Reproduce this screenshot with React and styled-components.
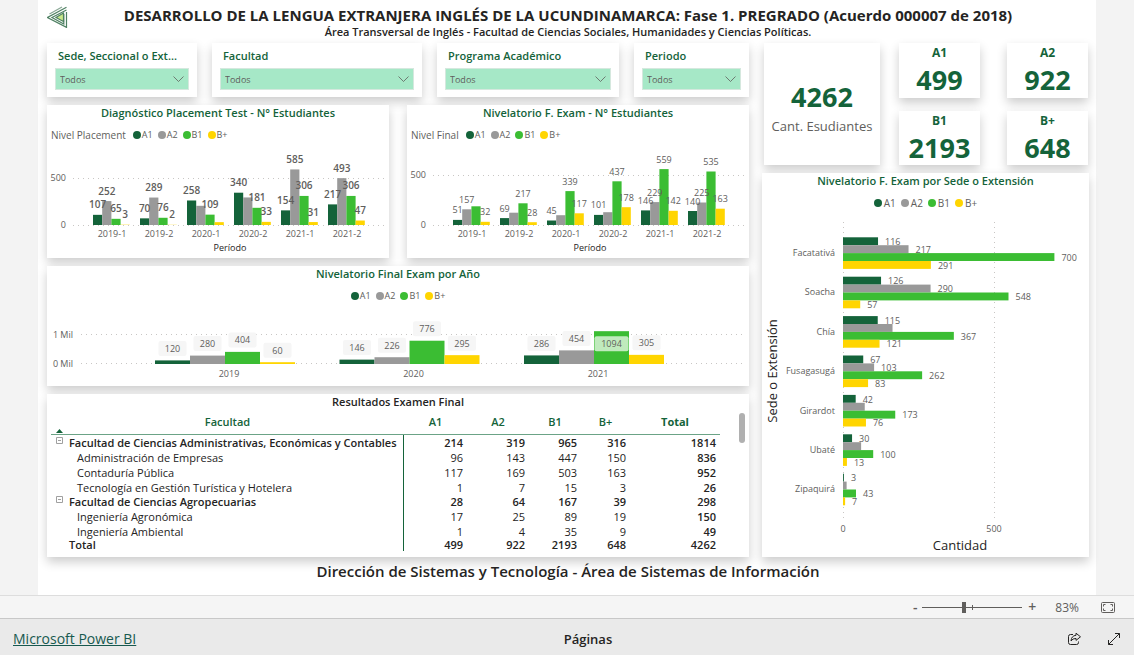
import React from 'react'
import styled, { createGlobalStyle } from 'styled-components'

const GlobalStyle = createGlobalStyle`
* {
  box-sizing: border-box;
}
body {
  margin: 0;
  background: #f3f3f3;
  color: #252423;
  font-family: "Open Sans", "Noto Sans", sans-serif;
}
h1, h2, h3, p {
  margin: 0;
}
`

const green = '#14633a'
const grey = '#605e5c'

const series = [
  { name: 'A1', color: '#14633a' },
  { name: 'A2', color: '#999999' },
  { name: 'B1', color: '#3bbd33' },
  { name: 'B+', color: '#ffd500' },
]

// hide: indexes of the series whose data label is not shown
const placement = [
  { label: '2019-1', values: [107, 252, 65, 3], hide: [] },
  { label: '2019-2', values: [70, 289, 76, 2], hide: [] },
  { label: '2020-1', values: [258, 202, 109, 30], hide: [1, 3] },
  { label: '2020-2', values: [340, 290, 181, 33], hide: [1] },
  { label: '2021-1', values: [154, 585, 306, 31], hide: [] },
  { label: '2021-2', values: [217, 493, 306, 47], hide: [] },
]

const finalExam = [
  { label: '2019-1', values: [51, 157, 187, 32], hide: [2] },
  { label: '2019-2', values: [69, 123, 217, 28], hide: [1] },
  { label: '2020-1', values: [45, 98, 339, 117], hide: [1] },
  { label: '2020-2', values: [101, 128, 437, 178], hide: [1] },
  { label: '2021-1', values: [146, 229, 559, 142], hide: [] },
  { label: '2021-2', values: [140, 225, 535, 163], hide: [] },
]

const years = [
  { label: '2019', values: [120, 280, 404, 60] },
  { label: '2020', values: [146, 226, 776, 295] },
  { label: '2021', values: [286, 454, 1094, 305] },
]

const campuses = [
  { label: 'Facatativá', values: [116, 217, 700, 291], hide: [] },
  { label: 'Soacha', values: [126, 290, 548, 57], hide: [] },
  { label: 'Chía', values: [115, 164, 367, 121], hide: [1] },
  { label: 'Fusagasugá', values: [67, 103, 262, 83], hide: [] },
  { label: 'Girardot', values: [42, 72, 173, 76], hide: [1] },
  { label: 'Ubaté', values: [30, 60, 100, 13], hide: [1] },
  { label: 'Zipaquirá', values: [3, 12, 43, 7], hide: [1] },
]

const results = [
  { name: 'Facultad de Ciencias Administrativas, Económicas y Contables', kind: 'group', values: [214, 319, 965, 316, 1814] },
  { name: 'Administración de Empresas', kind: 'child', values: [96, 143, 447, 150, 836] },
  { name: 'Contaduría Pública', kind: 'child', values: [117, 169, 503, 163, 952] },
  { name: 'Tecnología en Gestión Turística y Hotelera', kind: 'child', values: [1, 7, 15, 3, 26] },
  { name: 'Facultad de Ciencias Agropecuarias', kind: 'group', values: [28, 64, 167, 39, 298] },
  { name: 'Ingeniería Agronómica', kind: 'child', values: [17, 25, 89, 19, 150] },
  { name: 'Ingeniería Ambiental', kind: 'child', values: [1, 4, 35, 9, 49] },
  { name: 'Total', kind: 'total', values: [499, 922, 2193, 648, 4262] },
]

const filters = [
  { id: 'sede', label: 'Sede, Seccional o Ext...' },
  { id: 'facultad', label: 'Facultad' },
  { id: 'programa', label: 'Programa Académico' },
  { id: 'periodo', label: 'Periodo' },
]

const Canvas = styled.main`
  margin: 0 38px;
  padding: 0 7px 0 9px;
  background: #ffffff;
`

const Header = styled.header`
  display: grid;
  grid-template-columns: 24px 1fr 24px;
  align-items: start;
  height: 43px;
  padding-top: 6px;
`

const Titles = styled.div`
  display: flex;
  flex-direction: column;
  align-items: center;
  white-space: nowrap;
`

const Title = styled.h1`
  font-size: 15px;
  line-height: 19px;
`

const Subtitle = styled.p`
  font-size: 11px;
  line-height: 14px;
  font-weight: 600;
`

const Board = styled.div`
  display: grid;
  grid-template-columns: minmax(0, 702fr) minmax(0, 327fr);
  gap: 13px;
`

const Column = styled.div`
  display: flex;
  flex-direction: column;
  gap: 8px;
`

const Panel = styled.section`
  background: #ffffff;
  box-shadow: 0 5px 10px rgba(0, 0, 0, 0.2);
`

const PanelTitle = styled.h2`
  font-size: 11px;
  line-height: 16px;
  font-weight: 600;
  text-align: center;
  white-space: nowrap;
  color: ${(p) => (p.$dark ? '#252423' : green)};
`

const Filters = styled.div`
  display: grid;
  grid-template-columns: 150fr 210fr 182fr 115fr;
  gap: 15px;
`

const FilterCard = styled(Panel)`
  height: 54px;
  padding: 5px 8px 0;
`

const FilterLabel = styled.label`
  display: block;
  padding-left: 3px;
  font-size: 11px;
  line-height: 16px;
  font-weight: 600;
  white-space: nowrap;
  color: ${green};
`

const SelectWrap = styled.div`
  display: grid;
  align-items: center;
  margin-top: 4px;

  > * {
    grid-area: 1 / 1;
  }
  svg {
    justify-self: end;
    margin-right: 5px;
    pointer-events: none;
  }
`

const Select = styled.select`
  appearance: none;
  width: 100%;
  height: 22px;
  padding: 2px 4px 0;
  border: 1px solid #d5e8de;
  border-radius: 0;
  background: #a6e8c7;
  color: ${grey};
  font: 9px/16px "Open Sans", sans-serif;
`

const Pair = styled.div`
  display: grid;
  grid-template-columns: 1fr 1fr;
  gap: 18px;
`

const Legend = styled.div`
  display: flex;
  justify-content: ${(p) => (p.$center ? 'center' : 'flex-start')};
  align-items: center;
  gap: 5px;
  height: 22px;
  padding: 6px 4px 0;
  font-size: ${(p) => (p.$large ? '10px' : '9px')};
  line-height: 16px;
  color: ${grey};
`

const LegendTitle = styled.span`
  margin-right: 2px;
  font-size: 10px;
`

const LegendItem = styled.span`
  display: flex;
  align-items: center;
  gap: ${(p) => (p.$large ? '2px' : '1px')};
`

const Dot = styled.i`
  width: 8px;
  height: 8px;
  border-radius: 50%;
  background: ${(p) => p.$color};
`

const Plot = styled.svg`
  display: block;
  width: 100%;
  height: auto;
  font-size: 9px;
  fill: ${grey};

  .grid {
    stroke: #c8c6c4;
    stroke-dasharray: 1 4;
  }
  .bold {
    font-size: 10px;
    font-weight: 600;
  }
  .axis {
    font-size: 9px;
    fill: #252423;
  }
  .big {
    font-size: 13px;
    fill: #252423;
  }
`

const Kpis = styled.div`
  display: grid;
  grid-template-columns: 116fr 189fr;
  gap: 19px;
  height: 122px;
  padding: 0 1px 0 2px;
`

const TotalCard = styled(Panel)`
  display: flex;
  flex-direction: column;
  align-items: center;
  justify-content: center;
  gap: 2px;
  padding-top: 8px;
`

const LevelCards = styled.div`
  display: grid;
  grid-template-columns: 1fr 1fr;
  gap: 13px 27px;
`

const LevelCard = styled(Panel)`
  text-align: center;
`

const LevelName = styled.h3`
  font-size: 12px;
  line-height: 20px;
  color: ${green};
`

const Value = styled.p`
  font-size: 27px;
  line-height: 34px;
  font-weight: 700;
  color: ${green};
`

const Caption = styled.p`
  font-size: 13px;
  line-height: 20px;
  white-space: nowrap;
  color: ${grey};
`

const TableArea = styled.div`
  display: flex;
  align-items: flex-start;
  gap: 19px;
  padding: 0 4px 6px;
`

const ScrollThumb = styled.span`
  flex: none;
  width: 6px;
  height: 30px;
  margin-top: 3px;
  border-radius: 3px;
  background: #b0b0b0;
`

const Table = styled.table`
  flex: 1;
  table-layout: fixed;
  border-collapse: separate;
  border-spacing: 0;
  font-size: 11px;
  line-height: 13px;
  color: #252423;

  td, th {
    padding: 0 4px 0 0;
  }
`

const HeadCell = styled.th`
  height: 25px;
  width: ${(p) => p.$width || 'auto'};
  border-bottom: 1px solid #6ba386;
  font-weight: ${(p) => (p.$strong ? 700 : 600)};
  color: ${green};

  && {
    padding: 0 0 2px;
  }
  svg {
    float: left;
    margin: 14px -12px -14px 5px;
  }
`

const rowHeight = { group: '14px', child: '15px', total: '13px' }

const Row = styled.tr`
  height: ${(p) => rowHeight[p.$kind]};
  font-weight: ${(p) => (p.$kind === 'child' ? 400 : 600)};

  && > * {
    padding-top: ${(p) => (p.$kind === 'child' ? '1px' : 0)};
  }
`

const NameCell = styled.th`
  border-right: 1px solid ${green};
  font-weight: inherit;
  text-align: left;
  white-space: nowrap;

  && {
    padding-left: ${(p) => (p.$kind === 'child' ? '26px' : p.$kind === 'total' ? '18px' : '5px')};
  }
`

const Toggle = styled.button`
  width: 7px;
  height: 7px;
  margin: 0 6px 0 0;
  padding: 0;
  border: 0;
  background: none;
  line-height: 0;
  vertical-align: 3px;
`

const NumberCell = styled.td`
  text-align: right;
  font-weight: ${(p) => (p.$strong ? 600 : 'inherit')};
`

const Credits = styled.p`
  padding: 3px 0 12px;
  font-size: 15px;
  line-height: 23px;
  font-weight: 600;
  text-align: center;
`

const ZoomBar = styled.div`
  display: flex;
  justify-content: flex-end;
  align-items: center;
  height: 23px;
  padding-right: 19px;
  position: relative;
  border-top: 1px solid #dddddd;
  background: #f5f5f5;
  font-size: 12px;
  color: ${grey};
`

const ZoomButton = styled.button`
  width: 14px;
  height: 20px;
  padding: 0;
  border: 0;
  background: none;
  color: ${grey};
  font: 600 14px/18px "Open Sans", sans-serif;
  text-align: center;
`

const ZoomRange = styled.input`
  appearance: none;
  width: 100px;
  height: 11px;
  margin: 0 3px 0 0;
  background:
    linear-gradient(${grey}, ${grey}) 50px 3px / 1px 5px no-repeat,
    linear-gradient(${grey}, ${grey}) 0 5px / 100% 1px no-repeat;

  &::-webkit-slider-thumb {
    appearance: none;
    width: 4px;
    height: 11px;
    background: ${grey};
  }
`

const ZoomValue = styled.span`
  margin: 0 22px 0 16px;
`

const Footer = styled.footer`
  display: grid;
  grid-template-columns: 1fr auto 1fr;
  align-items: center;
  height: 37px;
  padding: 4px 13px 0;
  position: relative;
  border-top: 1px solid #c8c8c8;
  background: #eaeaea;
  font-size: 13px;
  line-height: 18px;
`

const BrandLink = styled.a`
  justify-self: start;
  font-size: 14px;
  color: #17594f;
`

const Pages = styled.span`
  padding-left: 42px;
  font-weight: 600;
`

const Actions = styled.div`
  display: flex;
  justify-content: flex-end;
  gap: 25px;
`

const IconButton = styled.button`
  display: flex;
  padding: 0;
  border: 0;
  background: none;
  color: #252423;
`

const BackLogo = () => (
  <svg width="22" height="22" viewBox="1 0 22 22" fill="none" stroke="#4f8163" strokeWidth="1.2">
    <path d="M20.5 1.2 L1.5 11.5 L20.5 21.4 V6" />
    <path d="M20.5 4 L6 11.5 L17.8 18 V8" />
    <path d="M16 1 L3.5 8" stroke="#8aa896" />
    <path d="M17.5 7 L10 11.5 L17.5 15.5 Z" fill="#c9e88a" />
  </svg>
)

const Chevron = () => (
  <svg width="11" height="6" viewBox="0 0 11 6" fill="none" stroke="#605e5c">
    <path d="M0.5 0.5 L5.5 5.5 L10.5 0.5" strokeWidth="0.8" />
  </svg>
)

const SeriesLegend = ({ title, center, large }) => (
  <Legend $center={center} $large={large}>
    {title && <LegendTitle>{title}</LegendTitle>}
    {series.map((s) => (
      <LegendItem key={s.name} $large={large}>
        <Dot $color={s.color} />
        {s.name}
      </LegendItem>
    ))}
  </Legend>
)

const PeriodChart = ({ data, scale, bold }) => (
  <Plot viewBox="0 0 342 115">
    <path className="grid" d={`M26 82.5 H337 M26 ${Math.round(82 - 500 * scale)}.5 H337`} />
    <text x="19" y="85" textAnchor="end">0</text>
    <text x="19" y={85 - 500 * scale} textAnchor="end">500</text>
    {data.map((group, g) => (
      <g key={group.label}>
        {group.values.map((v, i) => (
          <rect key={i} x={46 + g * 47 + i * 9.2} y={82 - v * scale} width="9.2" height={v * scale} fill={series[i].color} />
        ))}
        <text x={65 + g * 47} y="94" textAnchor="middle">{group.label}</text>
      </g>
    ))}
    {data.map((group, g) =>
      group.values.map((v, i) =>
        group.hide.includes(i) ? null : (
          <text key={`${g}-${i}`} className={bold ? 'bold' : ''} x={50.6 + g * 47 + i * 9.2} y={75.5 - v * scale} textAnchor="middle">{v}</text>
        )
      )
    )}
    <text className="axis" x="183" y="108" textAnchor="middle">Período</text>
  </Plot>
)

const YearChart = () => (
  <Plot viewBox="0 0 702 82">
    <path className="grid" d="M34 30.5 H695 M34 59.5 H695" />
    <text x="26" y="34" textAnchor="end">1 Mil</text>
    <text x="26" y="63" textAnchor="end">0 Mil</text>
    {years.map((year, g) => (
      <g key={year.label}>
        {year.values.map((v, i) => {
          const x = 108 + g * 184.5 + i * 35
          const h = v * 0.03
          const inside = v > 1000
          const w = inside ? 34 : 28
          const cy = inside ? 72 - h + 0.5 : 48 - h
          return (
            <g key={i}>
              <rect x={x} y={60 - h} width="35" height={h} fill={series[i].color} />
              <rect x={x + 17.5 - w / 2} y={cy - 7.5} width={w} height="15" rx="2" fill={inside ? '#ffffff' : '#f6f6f6'} opacity={inside ? 0.68 : 1} />
              <text x={x + 17.5} y={cy + 3.5} textAnchor="middle">{v}</text>
            </g>
          )
        })}
        <text x={182 + g * 184.5} y="73" textAnchor="middle">{year.label}</text>
      </g>
    ))}
  </Plot>
)

const CampusChart = () => (
  <Plot viewBox="0 0 327 346">
    <path className="grid" d="M81.5 11 V309 M232.5 11 V309" />
    {campuses.map((campus, g) => (
      <text key={campus.label} x="73" y={45 + g * 39.4} textAnchor="end">{campus.label}</text>
    ))}
    {series.map((s, i) => (
      <g key={s.name}>
        {campuses.map((campus, g) => {
          const y = 26.3 + g * 39.4 + i * 7.9
          const w = campus.values[i] * 0.302
          return (
            <g key={campus.label}>
              <rect x="81" y={y} width={w} height="7.9" fill={s.color} />
              {!campus.hide.includes(i) && <text x={88 + w} y={y + 7.6}>{campus.values[i]}</text>}
            </g>
          )
        })}
      </g>
    ))}
    <text x="81" y="321" textAnchor="middle">0</text>
    <text x="232" y="321" textAnchor="middle">500</text>
    <text className="big" x="198" y="339" textAnchor="middle">Cantidad</text>
    <text className="big" transform="translate(15 160) rotate(-90)" textAnchor="middle">Sede o Extensión</text>
  </Plot>
)

const ResultsTable = () => (
  <TableArea>
    <Table>
      <thead>
        <tr>
          <HeadCell>
            <svg width="7" height="4" viewBox="0 0 7 4"><path d="M0 4 L3.5 0 L7 4 Z" fill={green} /></svg>
            Facultad
          </HeadCell>
          <HeadCell $width="63px">A1</HeadCell>
          <HeadCell $width="62px">A2</HeadCell>
          <HeadCell $width="52px">B1</HeadCell>
          <HeadCell $width="49px">B+</HeadCell>
          <HeadCell $width="90px" $strong>Total</HeadCell>
        </tr>
      </thead>
      <tbody>
        {results.map((r) => (
          <Row key={r.name} $kind={r.kind}>
            <NameCell scope="row" $kind={r.kind}>
              {r.kind === 'group' && (
                <Toggle aria-label="Contraer">
                  <svg width="7" height="7" viewBox="0 0 7 7" fill="none" stroke="#a0a0a0">
                    <path d="M0.5 0.5 H6.5 V6.5 H0.5 Z M2 3.5 H5" />
                  </svg>
                </Toggle>
              )}
              {r.name}
            </NameCell>
            {r.values.map((v, i) => (
              <NumberCell key={i} $strong={i === 4}>{v}</NumberCell>
            ))}
          </Row>
        ))}
      </tbody>
    </Table>
    <ScrollThumb />
  </TableArea>
)

const Level = ({ name, value }) => (
  <LevelCard>
    <LevelName>{name}</LevelName>
    <Value>{value}</Value>
  </LevelCard>
)

const App = () => {
  return (
    <>
      <GlobalStyle />
      <Canvas>
        <Header>
          <BackLogo />
          <Titles>
            <Title>DESARROLLO DE LA LENGUA EXTRANJERA INGLÉS DE LA UCUNDINAMARCA: Fase 1. PREGRADO (Acuerdo 000007 de 2018)</Title>
            <Subtitle>Área Transversal de Inglés - Facultad de Ciencias Sociales, Humanidades y Ciencias Políticas.</Subtitle>
          </Titles>
        </Header>
        <Board>
          <Column>
            <Filters>
              {filters.map((f) => (
                <FilterCard key={f.id}>
                  <FilterLabel htmlFor={f.id}>{f.label}</FilterLabel>
                  <SelectWrap>
                    <Select id={f.id}>
                      <option>Todos</option>
                    </Select>
                    <Chevron />
                  </SelectWrap>
                </FilterCard>
              ))}
            </Filters>
            <Pair>
              <Panel>
                <PanelTitle>Diagnóstico Placement Test - N° Estudiantes</PanelTitle>
                <SeriesLegend title="Nivel Placement" />
                <PeriodChart data={placement} scale={0.095} bold />
              </Panel>
              <Panel>
                <PanelTitle>Nivelatorio F. Exam - N° Estudiantes</PanelTitle>
                <SeriesLegend title="Nivel Final" />
                <PeriodChart data={finalExam} scale={0.1} />
              </Panel>
            </Pair>
            <Panel>
              <PanelTitle>Nivelatorio Final Exam por Año</PanelTitle>
              <SeriesLegend center />
              <YearChart />
            </Panel>
            <Panel>
              <PanelTitle $dark>Resultados Examen Final</PanelTitle>
              <ResultsTable />
            </Panel>
          </Column>
          <Column>
            <Kpis>
              <TotalCard>
                <Value>4262</Value>
                <Caption>Cant. Esudiantes</Caption>
              </TotalCard>
              <LevelCards>
                <Level name="A1" value="499" />
                <Level name="A2" value="922" />
                <Level name="B1" value="2193" />
                <Level name="B+" value="648" />
              </LevelCards>
            </Kpis>
            <Panel>
              <PanelTitle>Nivelatorio F. Exam por Sede o Extensión</PanelTitle>
              <SeriesLegend center large />
              <CampusChart />
            </Panel>
          </Column>
        </Board>
        <Credits>Dirección de Sistemas y Tecnología - Área de Sistemas de Información</Credits>
      </Canvas>
      <ZoomBar>
        <ZoomButton aria-label="Alejar">-</ZoomButton>
        <ZoomRange type="range" aria-label="Zoom" min="0" max="100" defaultValue="41" />
        <ZoomButton aria-label="Acercar">+</ZoomButton>
        <ZoomValue>83%</ZoomValue>
        <IconButton aria-label="Ajustar a la página">
          <svg width="14" height="11" viewBox="0 0 14 11" fill="none" stroke="#605e5c">
            <rect x="0.5" y="0.5" width="13" height="10" rx="1" />
            <path d="M4.5 2.5 H2.5 V4.5 M9.5 2.5 H11.5 V4.5 M4.5 8.5 H2.5 V6.5 M9.5 8.5 H11.5 V6.5" />
          </svg>
        </IconButton>
      </ZoomBar>
      <Footer>
        <BrandLink href="#">Microsoft Power BI</BrandLink>
        <Pages>Páginas</Pages>
        <Actions>
          <IconButton aria-label="Compartir">
            <svg width="15" height="14" viewBox="0 0 15 14" fill="none" stroke="currentColor" strokeLinejoin="round">
              <path d="M6 2.5 H3.5 Q1.5 2.5 1.5 4.5 V10.5 Q1.5 12.5 3.5 12.5 H9.5 Q11.5 12.5 11.5 10.5 V9.5" />
              <path d="M9 1.2 L13.5 4.8 L9 8.4 V6.4 Q5.5 6.4 4 9 Q4.4 3.7 9 3.3 Z" />
            </svg>
          </IconButton>
          <IconButton aria-label="Pantalla completa">
            <svg width="14" height="14" viewBox="0 0 14 14" fill="none" stroke="currentColor">
              <path d="M1.5 12.5 L12.5 1.5 M8 1.5 H12.5 V6 M1.5 8 V12.5 H6" />
            </svg>
          </IconButton>
        </Actions>
      </Footer>
    </>
  )
}

export default App
